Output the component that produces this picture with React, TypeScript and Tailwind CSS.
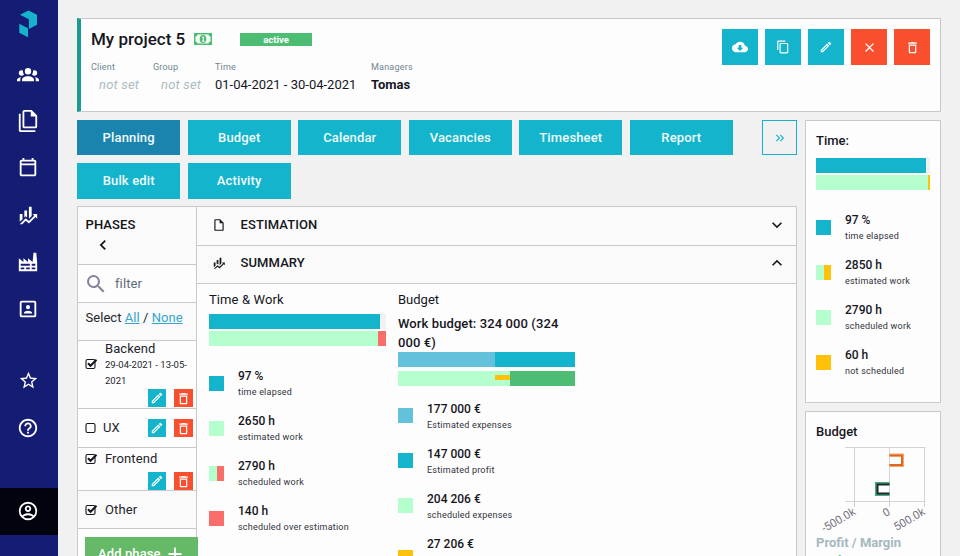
import React from "react";
import {
  MdClose,
  MdCloudDownload,
  MdContentCopy,
  MdDeleteOutline,
  MdHelpOutline,
  MdKeyboardArrowDown,
  MdKeyboardArrowUp,
  MdKeyboardArrowLeft,
  MdKeyboardDoubleArrowRight,
  MdOutlineEdit,
  MdSearch,
  MdStarBorder,
} from "react-icons/md";

const paths = {
  group:
    "M12,5.5A3.5,3.5 0 0,1 15.5,9A3.5,3.5 0 0,1 12,12.5A3.5,3.5 0 0,1 8.5,9A3.5,3.5 0 0,1 12,5.5M5,8C5.56,8 6.08,8.15 6.53,8.42C6.38,9.85 6.8,11.27 7.66,12.38C7.16,13.34 6.16,14 5,14A3,3 0 0,1 2,11A3,3 0 0,1 5,8M19,8A3,3 0 0,1 22,11A3,3 0 0,1 19,14C17.84,14 16.84,13.34 16.34,12.38C17.2,11.27 17.62,9.85 17.47,8.42C17.92,8.15 18.44,8 19,8M5.5,18.25C5.5,16.18 8.41,14.5 12,14.5C15.59,14.5 18.5,16.18 18.5,18.25V20H5.5V18.25M0,20V18.5C0,17.11 1.89,15.94 4.45,15.6C3.86,16.28 3.5,17.22 3.5,18.25V20H0M24,20H20.5V18.25C20.5,17.22 20.14,16.28 19.55,15.6C22.11,15.94 24,17.11 24,18.5V20Z",
  files:
    "M16,0H8C6.9,0 6,0.9 6,2V18C6,19.1 6.9,20 8,20H20C21.1,20 22,19.1 22,18V6L16,0M20,18H8V2H15V7H20V18M4,4V22H20V24H4C2.9,24 2,23.1 2,22V4H4Z",
  calendar:
    "M19 3H18V1H16V3H8V1H6V3H5C3.89 3 3 3.9 3 5V19C3 20.11 3.9 21 5 21H19C20.11 21 21 20.11 21 19V5C21 3.9 20.11 3 19 3M19 19H5V9H19V19M19 7H5V5H19V7Z",
  finance:
    "M6,16.5L3,19.44V11H6M11,14.66L9.43,13.32L8,14.64V7H11M16,13L13,16V3H16M18.81,12.81L17,11H22V16L20.21,14.21L13,21.36L9.53,18.34L5.75,22H3L9.47,15.66L13,18.64",
  factory:
    "M4,18V20H8V18H4M4,14V16H14V14H4M10,18V20H14V18H10M16,14V16H20V14H16M16,18V20H20V18H16M2,22V8L7,12V8L12,12V8L17,12L18,2H21L22,12V22H2Z",
  contact:
    "M19,19H5V5H19M19,3H5A2,2 0 0,0 3,5V19A2,2 0 0,0 5,21H19A2,2 0 0,0 21,19V5A2,2 0 0,0 19,3M16.5,16.25C16.5,14.75 13.5,14 12,14C10.5,14 7.5,14.75 7.5,16.25V17H16.5M12,12.25A2.25,2.25 0 0,0 14.25,10A2.25,2.25 0 0,0 12,7.75A2.25,2.25 0 0,0 9.75,10A2.25,2.25 0 0,0 12,12.25Z",
  account:
    "M12,2A10,10 0 0,0 2,12A10,10 0 0,0 12,22A10,10 0 0,0 22,12A10,10 0 0,0 12,2M7.07,18.28C7.5,17.38 10.12,16.5 12,16.5C13.88,16.5 16.5,17.38 16.93,18.28C15.57,19.36 13.86,20 12,20C10.14,20 8.43,19.36 7.07,18.28M18.36,16.83C16.93,15.09 13.46,14.5 12,14.5C10.54,14.5 7.07,15.09 5.64,16.83C4.62,15.5 4,13.82 4,12C4,7.59 7.59,4 12,4C16.41,4 20,7.59 20,12C20,13.82 19.38,15.5 18.36,16.83M12,6C10.06,6 8.5,7.56 8.5,9.5C8.5,11.44 10.06,13 12,13C13.94,13 15.5,11.44 15.5,9.5C15.5,7.56 13.94,6 12,6M12,11A1.5,1.5 0 0,1 10.5,9.5A1.5,1.5 0 0,1 12,8A1.5,1.5 0 0,1 13.5,9.5A1.5,1.5 0 0,1 12,11Z",
  file: "M14,2H6A2,2 0 0,0 4,4V20A2,2 0 0,0 6,22H18A2,2 0 0,0 20,20V8L14,2M18,20H6V4H13V9H18V20Z",
};

function Glyph({ name, size = 22 }: { name: keyof typeof paths; size?: number }) {
  return (
    <svg width={size} height={size} viewBox="0 0 24 24" fill="currentColor" className="shrink-0">
      <path d={paths[name]} />
    </svg>
  );
}

function NavItem({ children, dark }: { children: React.ReactNode; dark?: boolean }) {
  return (
    <a className={`flex h-[47px] shrink-0 items-center justify-center pr-[2px] pb-[2px] text-white ${dark ? "bg-[#03030f]" : ""}`}>
      {children}
    </a>
  );
}

function Sidebar() {
  return (
    <nav className="flex w-[58px] shrink-0 flex-col bg-[#141c73]">
      <div className="flex h-[51px] shrink-0 items-start justify-center pt-[10px] pr-[2px]">
        <svg width="19" height="28" viewBox="0 0 19 28" fill="#16b4cc">
          <path d="M1 4.8 9.5 .5 18 4.8V14.8L9.9 19V9.2Z" />
          <path d="M.3 13.8 9 18.2V27.2L.3 22.7Z" />
        </svg>
      </div>
      <NavItem><Glyph name="group" /></NavItem>
      <NavItem><Glyph name="files" /></NavItem>
      <NavItem><Glyph name="calendar" /></NavItem>
      <NavItem><Glyph name="finance" /></NavItem>
      <NavItem><Glyph name="factory" /></NavItem>
      <NavItem><Glyph name="contact" /></NavItem>
      <div className="h-[25px] shrink-0" />
      <NavItem><MdStarBorder size={21} /></NavItem>
      <NavItem><MdHelpOutline size={22} /></NavItem>
      <div className="h-[36px] shrink-0" />
      <NavItem dark><Glyph name="account" /></NavItem>
    </nav>
  );
}

function Field({ label, width, children }: { label: string; width: string; children: React.ReactNode }) {
  return (
    <div className={width}>
      <div className="text-[9px] leading-[12px] tracking-[0.2px] text-[#6f868e]">{label}</div>
      <div className="mt-[3px] text-[13px] leading-[18px] whitespace-nowrap">{children}</div>
    </div>
  );
}

function NotSet() {
  return <span className="pl-2 tracking-[0.2px] text-[#a9bcc2] italic">not set</span>;
}

function Header() {
  const btn = "flex size-9 items-center justify-center text-white";
  return (
    <header className="flex h-[94px] shrink-0 justify-between border border-l-4 border-[#c9c9c9] border-l-[#1a9b90] bg-[#fdfdfd] pl-[10px] pr-[10px]">
      <div>
        <div className="flex h-[40px] items-center">
          <h1 className="w-[103px] pt-[2px] text-[17px] font-medium whitespace-nowrap">My project 5</h1>
          <svg width="18" height="12" viewBox="0 0 18 12">
            <rect width="18" height="12" fill="#4dbd74" />
            <path d="M3.5 1.5H14.5A2 2 0 0 0 16.5 3.5V8.5A2 2 0 0 0 14.5 10.5H3.5A2 2 0 0 0 1.5 8.5V3.5A2 2 0 0 0 3.5 1.5Z" fill="#f6fff8" />
            <ellipse cx="9" cy="6" rx="3.3" ry="4" fill="#4dbd74" />
            <path d="M8 4.5 9.3 3.8V8M8 8.2H10.5" stroke="#fff" fill="none" />
          </svg>
          <span className="ml-[28px] flex h-[13px] w-[72px] items-center justify-center bg-[#4dbd74] pt-[2px] text-[9.5px] font-bold text-white">active</span>
        </div>
        <div className="mt-[2px] flex">
          <Field label="Client" width="w-[62px]"><NotSet /></Field>
          <Field label="Group" width="w-[62px]"><NotSet /></Field>
          <Field label="Time" width="w-[156px]"><span>01-04-2021 - 30-04-2021</span></Field>
          <Field label="Managers" width="w-[60px]"><b>Tomas</b></Field>
        </div>
      </div>
      <div className="flex gap-[7px] pt-[10px]">
        <button className={`${btn} bg-[#14b4cc]`}><MdCloudDownload size={16} /></button>
        <button className={`${btn} bg-[#14b4cc]`}><MdContentCopy size={14} /></button>
        <button className={`${btn} bg-[#14b4cc]`}><MdOutlineEdit size={14} /></button>
        <button className={`${btn} bg-[#f84f2e]`}><MdClose size={15} /></button>
        <button className={`${btn} bg-[#f84f2e]`}><MdDeleteOutline size={15} /></button>
      </div>
    </header>
  );
}

const tabs = ["Planning", "Budget", "Calendar", "Vacancies", "Timesheet", "Report", "Bulk edit", "Activity"];

function Tabs() {
  return (
    <div className="flex h-[79px] items-start justify-between">
      <div className="grid w-[656px] grid-cols-6 gap-x-[7.2px] gap-y-[8px]">
        {tabs.map((t, i) => (
          <button key={t} className={`h-[35.4px] text-[13px] font-medium tracking-[0.15px] text-[#f1fbfc] ${i === 0 ? "bg-[#1b84ae]" : "bg-[#14b4cc]"}`}>
            {t}
          </button>
        ))}
      </div>
      <div className="flex size-[35px] items-center justify-center border border-[#14b4cc] text-[#14b4cc]">
        <MdKeyboardDoubleArrowRight size={14} />
      </div>
    </div>
  );
}

function Check({ on, className = "" }: { on?: boolean; className?: string }) {
  return (
    <svg width="13" height="12" viewBox="0 0 13 12" fill="none" stroke="#16161e" className={`shrink-0 ${className}`}>
      <rect x="1" y="1.5" width="9" height="9" rx="1.5" strokeWidth="1.1" />
      {on && <path d="M3 5.2 5.5 7.8 11.5 1.8" strokeWidth="2" />}
    </svg>
  );
}

function RowButtons() {
  return (
    <div className="flex gap-[8px] text-white">
      <button className="flex h-[18px] w-[18px] items-center justify-center bg-[#14b4cc]"><MdOutlineEdit size={14} /></button>
      <button className="flex h-[18px] w-[19px] items-center justify-center bg-[#f84f2e]"><MdDeleteOutline size={15} /></button>
    </div>
  );
}

function Phases() {
  const line = "shrink-0 border-b border-[#c9c9c9]";
  return (
    <aside className="z-10 flex w-[120px] shrink-0 flex-col border-r border-l border-[#c9c9c9] bg-[#fdfdfd] text-[13px] tracking-[0.1px] text-[#23252c]">
      <div className={`h-[58px] bg-[#fafafa] pt-[9px] pl-[7.5px] text-[13px] leading-[18px] font-medium text-[#111118] ${line}`}>
        PHASES
        <MdKeyboardArrowLeft size={20} className="mt-[1px] ml-[7.5px]" />
      </div>
      <div className={`flex h-[38px] items-center pl-[6px] text-[#5d6a7a] ${line}`}>
        <MdSearch size={24} className="text-[#83839a]" />
        <span className="ml-[7px]">filter</span>
      </div>
      <div className={`h-[38px] bg-[#fafafa] pt-[5px] pl-[7.5px] leading-[20px] tracking-[0.05px] whitespace-nowrap ${line}`}>
        Select <a className="text-[#36a6cc] underline">All</a> / <a className="text-[#36a6cc] underline">None</a>
      </div>
      <div className={`flex h-[68px] flex-col ${line}`}>
        <div className="flex h-[48px] pl-[7px]">
          <Check on className="mt-[17px]" />
          <div className="ml-[7px]">
            <div className="leading-[16px]">Backend</div>
            <div className="w-[88px] text-[9.5px] leading-[16px] tracking-normal">29-04-2021 - 13-05-2021</div>
          </div>
        </div>
        <div className="flex justify-end pr-[3px]"><RowButtons /></div>
      </div>
      <div className={`flex h-[39px] items-center justify-between pr-[3px] pl-[7px] ${line}`}>
        <div className="flex items-center"><Check /><span className="ml-[5px]">UX</span></div>
        <RowButtons />
      </div>
      <div className={`flex h-[43px] flex-col justify-between ${line}`}>
        <div className="flex h-[21px] items-center pl-[7px]"><Check on /><span className="ml-[7px]">Frontend</span></div>
        <div className="flex justify-end pr-[3px]"><RowButtons /></div>
      </div>
      <div className={`flex h-[38px] items-center bg-[#fafafa] pl-[7px] ${line}`}><Check on /><span className="ml-[7px]">Other</span></div>
      <button className="mt-[8px] ml-[7px] flex h-[34px] w-[113px] shrink-0 items-center bg-[#66b966] pl-[13px] text-[13px] font-medium whitespace-nowrap text-white">
        Add phase
        <svg width="14" height="14" viewBox="0 0 14 14" stroke="#fff" strokeWidth="1.8" className="ml-[7px]"><path d="M7 .5V13.5M.5 7H13.5" /></svg>
      </button>
    </aside>
  );
}

type Item = { value: string; label: string; colors: string[]; tall?: boolean };

const mint = "bg-[#b5ffcf]";
const cyan = "bg-[#14b4cc]";
const red = "bg-[#f96e6b]";
const amber = "bg-[#ffc10a]";

function Legend({ items, low }: { items: Item[]; low?: boolean }) {
  return (
    <div>
      {items.map((it) => (
        <div key={it.value} className={`flex ${it.tall ? "h-[60px]" : "h-[45px]"}`}>
          <div className={`flex size-[15px] shrink-0 ${it.tall ? "mt-[16px]" : "mt-[9px]"}`}>
            {it.colors.map((c) => <span key={c} className={`flex-1 ${c}`} />)}
          </div>
          <div className={`ml-[14px] whitespace-nowrap ${low ? "pt-[2px]" : "pt-[1px]"}`}>
            <div className="text-[12px] leading-[17px] font-medium">{it.value}</div>
            <div className="-mt-px text-[9px] leading-[16px] tracking-[0.22px] text-[#30323a]">{it.label}</div>
          </div>
        </div>
      ))}
    </div>
  );
}

function Summary() {
  return (
    <section className="flex flex-1 pl-[12px]">
      <div className="w-[177px]">
        <h3 className="h-[30px] pt-[6px] text-[13px] leading-[20px] tracking-[0.1px]">Time &amp; Work</h3>
        <div className="flex h-[15px] bg-[#f1f1f1]"><span className={`w-[171px] ${cyan}`} /></div>
        <div className="mt-[2px] flex h-[15px]"><span className={`w-[169px] ${mint}`} /><span className={`flex-1 ${red}`} /></div>
        <div className="mt-[21px]">
          <Legend items={[
            { value: "97 %", label: "time elapsed", colors: [cyan] },
            { value: "2650 h", label: "estimated work", colors: [mint] },
            { value: "2790 h", label: "scheduled work", colors: [mint, red] },
            { value: "140 h", label: "scheduled over estimation", colors: [red] },
          ]} />
        </div>
      </div>
      <div className="ml-[12px] w-[177px]">
        <h3 className="h-[30px] pt-[6px] text-[13px] leading-[20px]">Budget</h3>
        <p className="h-[38px] text-[13px] leading-[19px] font-medium tracking-[0.1px]">Work budget: 324 000 (324 000 €)</p>
        <div className="flex h-[15px]"><span className="w-[97px] bg-[#63c1dc]" /><span className={`flex-1 ${cyan}`} /></div>
        <div className="mt-[4px] flex h-[15px]">
          <span className={`w-[97px] ${mint}`} />
          <span className={`flex w-[15px] flex-col pt-[4px] ${mint}`}><span className={`h-[5px] ${amber}`} /></span>
          <span className="flex-1 bg-[#4dbd74]" />
        </div>
        <div className="mt-[13px]">
          <Legend low items={[
            { value: "177 000 €", label: "Estimated expenses", colors: ["bg-[#63c1dc]"] },
            { value: "147 000 €", label: "Estimated profit", colors: [cyan] },
            { value: "204 206 €", label: "scheduled expenses", colors: [mint] },
            { value: "27 206 €", label: "", colors: [amber], tall: true },
          ]} />
        </div>
      </div>
    </section>
  );
}

function BudgetChart() {
  return (
    <svg width="124" height="90" viewBox="0 0 124 90" fill="none" className="-ml-[10px] block">
      <path d="M39 .5H119.500M39 54.500H119.500" stroke="#d3d3d3" />
      <path d="M48.500 0V60M83.500 0V60M118.500 0V60" stroke="#d3d3d9" />
      <path d="M83.500 8H96.500V18.500H83.500" stroke="#efad6b" strokeWidth="3" />
      <path d="M83.500 8.500H96V18H83.500" stroke="#e2651f" strokeWidth="2" />
      <path d="M83.500 36.500H70.500V47.500H83.500" stroke="#49a978" strokeWidth="3" />
      <path d="M83.500 37.500H71.500V46.500H83.500" stroke="#1b2831" strokeWidth="2" />
      <g fill="#77717f" fontSize="11.3" textAnchor="end" fontFamily="Roboto, sans-serif">
        <text transform="translate(50.500 67) rotate(-30)">-500.0k</text>
        <text transform="translate(85 67) rotate(-30)">0</text>
        <text transform="translate(120 67) rotate(-30)">500.0k</text>
      </g>
    </svg>
  );
}

function RightColumn() {
  const card = "shrink-0 border border-[#c9c9c9] bg-[#fdfdfd] px-[10px]";
  return (
    <div className="flex w-[136px] shrink-0 flex-col gap-[8px]">
      <section className={`h-[283px] ${card}`}>
        <h3 className="h-[37px] pt-[10px] text-[13px] leading-[20px] font-medium">Time:</h3>
        <div className="flex h-[15px] bg-[#f1f1f1]"><span className={`w-[110px] ${cyan}`} /></div>
        <div className="mt-[2px] flex h-[15px]"><span className={`w-[112px] ${mint}`} /><span className={`w-[2px] ${amber}`} /></div>
        <div className="mt-[21px]">
          <Legend items={[
            { value: "97 %", label: "time elapsed", colors: [cyan] },
            { value: "2850 h", label: "estimated work", colors: [mint, amber] },
            { value: "2790 h", label: "scheduled work", colors: [mint] },
            { value: "60 h", label: "not scheduled", colors: [amber] },
          ]} />
        </div>
      </section>
      <section className={`h-[220px] ${card}`}>
        <h3 className="h-[35px] pt-[10px] text-[13px] leading-[20px] font-medium">Budget</h3>
        <BudgetChart />
        <div className="-mt-[3px] text-[13px] leading-[18px] font-bold whitespace-nowrap text-[#a5b8be]">Profit / Margin</div>
        <div className="text-[13px] leading-[17px] font-bold text-[#4dbd74]">0.0 k / 0</div>
      </section>
    </div>
  );
}

export default function App() {
  const bar = "flex shrink-0 items-center border-b border-[#c9c9c9] bg-[#fafafa] pr-[9px] pl-[15px] text-[13px] font-medium tracking-[0.1px]";
  return (
    <div className="flex h-[556px] w-[960px] overflow-hidden bg-[#f1f1f1] font-[Roboto,sans-serif] text-[#16161e]">
      <Sidebar />
      <main className="flex w-[902px] shrink-0 flex-col pt-[18px] pr-[19px] pl-[19px]">
        <Header />
        <div className="mt-[8px] flex shrink-0 justify-between">
          <div className="w-[720px] shrink-0">
            <Tabs />
            <div className="mt-[7px] flex h-[400px] border-t border-[#c9c9c9]">
              <Phases />
              <div className="flex flex-1 flex-col border-r border-[#c9c9c9] bg-[#fdfdfd]">
                <div className={`h-[39px] pb-[2px] ${bar}`}>
                  <Glyph name="file" size={14} /><span className="ml-[14.5px] flex-1">ESTIMATION</span><MdKeyboardArrowDown size={20} />
                </div>
                <div className={`h-[38px] pb-[3px] ${bar}`}>
                  <Glyph name="finance" size={14} /><span className="ml-[14.5px] flex-1">SUMMARY</span><MdKeyboardArrowUp size={20} />
                </div>
                <Summary />
              </div>
            </div>
          </div>
          <RightColumn />
        </div>
      </main>
    </div>
  );
}
